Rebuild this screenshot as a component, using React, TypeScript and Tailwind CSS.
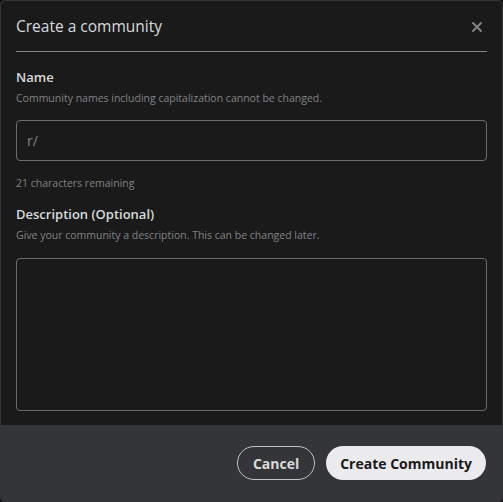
import { X } from 'lucide-react'

export default function App() {
  return (
    <div className="w-[503px] h-[502px] bg-[#0b0b0b] font-['Open_Sans',sans-serif]">
      <div className="flex h-full w-full flex-col overflow-hidden rounded-[4px] border border-[#343536] bg-[#1a1a1b]">
        <div className="flex-1 px-[15px]">
          {/* header */}
          <div className="flex h-[51px] items-center justify-between border-b border-[#818384]">
            <h1 className="pt-[2px] text-[15.5px] text-[#d7dadc]">Create a community</h1>
            <button className="mr-[2px] mt-[2px] text-[#818384]">
              <X size={16} strokeWidth={3} />
            </button>
          </div>

          {/* name */}
          <div className="pt-[15px]">
            <h2 className="text-[13px] font-semibold leading-[20px] text-[#d7dadc]">Name</h2>
            <p className="mt-[4px] text-[10.5px] leading-[14px] text-[#818384]">
              Community names including capitalization cannot be changed.
            </p>
            <div className="mt-[15px] flex h-[41px] items-center rounded-[4px] border border-[#6b6c6e] px-[10px] text-[14px] text-[#818384]">
              r/
            </div>
            <p className="mt-[15px] text-[10.5px] leading-[14px] text-[#818384]">21 characters remaining</p>
          </div>

          {/* description */}
          <div className="pt-[14px]">
            <h2 className="text-[13px] font-semibold leading-[20px] text-[#d7dadc]">Description (Optional)</h2>
            <p className="mt-[4px] text-[10.5px] leading-[14px] text-[#818384]">
              Give your community a description. This can be changed later.
            </p>
            <div className="mt-[16px] h-[153px] rounded-[4px] border border-[#6b6c6e]" />
          </div>
        </div>

        {/* footer */}
        <div className="flex h-[76px] items-center justify-end gap-[11px] bg-[#343538] pl-[15px] pr-[16px]">
          <button className="h-[34px] rounded-full border border-[#c4c4c4] px-[15px] text-[14px] font-bold text-[#d7dadc]">
            Cancel
          </button>
          <button className="h-[34px] rounded-full bg-[#ebebed] px-[14px] text-[14px] font-bold text-[#1a1a1b]">
            Create Community
          </button>
        </div>
      </div>
    </div>
  )
}
